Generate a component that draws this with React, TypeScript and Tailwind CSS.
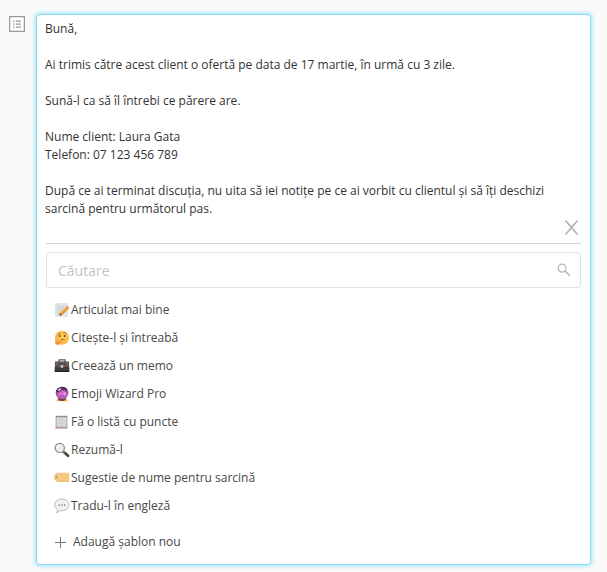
import React, { useState } from 'react';

interface Template {
  id: string;
  label: string;
  icon: React.ReactNode;
}

const message = `Bună,

Ai trimis către acest client o ofertă pe data de 17 martie, în urmă cu 3 zile.

Sună-l ca să îl întrebi ce părere are.

Nume client: Laura Gata
Telefon: 07 123 456 789

După ce ai terminat discuția, nu uita să iei notițe pe ce ai vorbit cu clientul și să îți deschizi sarcină pentru următorul pas.`;

const templates: Template[] = [
  { id: 'articulate', label: 'Articulat mai bine', icon: <MemoIcon /> },
  { id: 'ask', label: 'Citește-l și întreabă', icon: <ThinkingIcon /> },
  { id: 'memo', label: 'Creează un memo', icon: <BriefcaseIcon /> },
  { id: 'emoji', label: 'Emoji Wizard Pro', icon: <CrystalBallIcon /> },
  { id: 'bullets', label: 'Fă o listă cu puncte', icon: <NotepadIcon /> },
  { id: 'summary', label: 'Rezumă-l', icon: <MagnifierIcon /> },
  { id: 'name', label: 'Sugestie de nume pentru sarcină', icon: <LabelIcon /> },
  { id: 'translate', label: 'Tradu-l în engleză', icon: <SpeechIcon /> },
];

export default function App() {
  const [query, setQuery] = useState('');
  const visible = templates.filter(t => t.label.toLowerCase().includes(query.toLowerCase()));

  return (
    <div className="h-[572px] w-[607px] overflow-hidden bg-[#fafafa] pl-[9px] pt-[14px] flex items-start font-['Open_Sans',sans-serif] text-[12px] leading-[18px] text-[#333]">
      <ListIcon />
      <div className="ml-[11px] h-[551px] w-[555px] shrink-0 rounded-[4px] border border-[#8bdcf3] bg-white px-[9px] shadow-[0_0_4px_1px_#96e2f8] flex flex-col">
        <p className="-ml-px mt-[5px] h-[198px] whitespace-pre-wrap">{message}</p>

        <div className="flex h-[26px] justify-end border-b border-[#d2d2d2] pr-[2px] pt-[2px]">
          <button aria-label="Închide" className="h-[15px] w-[15px]">
            <svg viewBox="0 0 15 15" className="h-[15px] w-[15px]" fill="none" stroke="#b0b0b0" strokeWidth="1.6">
              <path d="M1.5 .5 13.5 14.5M13.5 .5 1.5 14.5" />
            </svg>
          </button>
        </div>

        <label className="mt-2 flex h-[36px] shrink-0 items-center rounded-[3px] border border-[#dfdfe5] pl-[11px] pr-[9px]">
          <input
            value={query}
            onChange={e => setQuery(e.target.value)}
            placeholder="Căutare"
            className="min-w-0 flex-1 pt-[2px] text-[14px] outline-none placeholder:text-[#c3c3c3]"
          />
          <svg viewBox="0 0 14 14" className="h-[14px] w-[14px]" fill="none" stroke="#b5b5b5" strokeWidth="1.2">
            <circle cx="5.2" cy="5.2" r="4" />
            <path d="m8.2 8.2 4.8 4.5" strokeWidth="1.5" />
          </svg>
        </label>

        <ul className="mt-2 pl-2 text-[#484848]">
          {visible.map(t => (
            <li key={t.id} className="flex h-7 items-center gap-px">
              <svg viewBox="0 0 16 16" className="h-4 w-4 shrink-0">{t.icon}</svg>
              <span>{t.label}</span>
            </li>
          ))}
        </ul>

        <button className="mt-2 flex h-7 items-center pl-2 text-[#484848]">
          <svg viewBox="0 0 12 12" className="mr-[7px] h-3 w-3" stroke="#777" strokeWidth="1">
            <path d="M6.5 1v11M1 6.5h11" />
          </svg>
          Adaugă șablon nou
        </button>
      </div>
    </div>
  );
}

function ListIcon() {
  return (
    <svg viewBox="0 0 16 16" className="mt-[2px] h-4 w-4 shrink-0" fill="none" stroke="#999">
      <rect x=".6" y=".6" width="14.8" height="14.8" fill="#fff" strokeWidth="1.3" />
      <path d="M4 5.2h1.6M4 8.2h1.6M4 11.2h1.6M7 5.2h5M7 8.2h5M7 11.2h5" strokeWidth="1.2" />
    </svg>
  );
}

function MemoIcon() {
  return (
    <>
      <path d="M1 1h13v14H1z" fill="#e5e6e8" />
      <path d="M3 4h8M3 6h7M3 8h6M3 10h4M3 12h3" stroke="#b9bec4" strokeWidth=".8" strokeDasharray="2 .6" />
      <path d="m5.2 13.8.9-3 6-6.1 2.3 2-6.1 6.2z" fill="#f5a72c" />
      <path d="m12.1 4.7 1-1 2.2 2-.9 1z" fill="#d7777d" />
      <path d="m5.2 13.8.9-3 2.2 2.1z" fill="#76573b" />
      <path d="m8 12.4 6-6" stroke="#b87922" strokeWidth=".7" />
    </>
  );
}

function ThinkingIcon() {
  return (
    <>
      <circle cx="8" cy="7.8" r="7" fill="#fbb94b" />
      <circle cx="8.5" cy="6" r="5" fill="#fdc653" />
      <circle cx="5.5" cy="6" r=".9" fill="#633f29" />
      <circle cx="10.7" cy="6" r=".9" fill="#633f29" />
      <path d="M4 4.2q1.4-1.2 2.8-.5M9.3 3q1.6-1 3 .4M6.7 9.6q2-.9 4 .2" fill="none" stroke="#7d4d29" strokeWidth=".7" />
      <path d="M1.3 10.2c1-.8 1.4.8 2.3 1.2l4-1.1c1 .1.8 1-.1 1.3l-1.8.7c1 1.3-.7 2.8-2.2 2.6C1.8 14.8.5 13.1 1.3 10.2Z" fill="#ef9830" />
    </>
  );
}

function BriefcaseIcon() {
  return (
    <>
      <path d="M5 4V1.8h6V4" fill="none" stroke="#555" strokeWidth="1.2" />
      <path d="M1.2 3.5h13.6L15.5 14H.5z" fill="#3d3b3d" />
      <path d="M1 4h14v3.5L8 9 1 7.5z" fill="#555052" />
      <path d="M1 8q7 1.5 14 0" fill="none" stroke="#9b6564" strokeWidth=".7" />
      <path d="M3 4v3M13 4v3" stroke="#a17b78" strokeWidth=".8" />
      <path d="M6.8 7h2.4v2.8H6.8z" fill="#c7c7c7" />
      <path d="M1 13.5h14" stroke="#252326" />
    </>
  );
}

function CrystalBallIcon() {
  return (
    <>
      <path d="m3 15 1.5-3h7l1.6 3z" fill="#79403e" />
      <path d="M2.8 14.5h3M10.2 14.5h3" stroke="#efa33d" strokeWidth="1.3" />
      <circle cx="8" cy="7" r="6.3" fill="#9a4a9f" />
      <path d="M2 6A6.2 6.2 0 0 1 13.8 4.6L9 3.6 4 6.2z" fill="#4f2c5c" />
      <path d="M3.4 7.6 8.2 4.4l4.2 1.8.6 3.3-4.1 3-4.6-1.4z" fill="#d36bcd" />
      <path d="m4.3 4.6 2.6-2.1" stroke="#f5dcf5" strokeWidth="1.4" />
      <circle cx="10.7" cy="7.4" r="1.2" fill="#e9a2e4" />
      <path d="M5.5 9.4q2 1.8 4.5.8" fill="none" stroke="#8a3a92" strokeWidth=".8" />
    </>
  );
}

function NotepadIcon() {
  return (
    <>
      <path d="M1.5 2h12v12h-12z" fill="#b6b6b6" />
      <path d="M2.8 3.6h9.4v9.2H2.8z" fill="#d9d9da" />
      <path d="M2 2.4h11" stroke="#777" strokeWidth="1.3" strokeDasharray="1 .6" />
      <path d="M4 5.5h7M4 7.5h7M4 9.5h7M4 11.5h7" stroke="#c5c5c8" strokeWidth=".5" />
      <path d="M1.5 14h12" stroke="#a77d80" />
    </>
  );
}

function MagnifierIcon() {
  return (
    <>
      <path d="m9 9.3 5 4.5" stroke="#454545" strokeWidth="2.7" strokeLinecap="round" />
      <path d="m8.8 8.8 2 1.8" stroke="#888" strokeWidth="1.5" />
      <circle cx="5.8" cy="5.9" r="4.6" fill="#e8eef0" stroke="#8c8c8c" strokeWidth="1.2" />
      <path d="M3.1 6a2.8 2.8 0 0 1 2.8-2.8" fill="none" stroke="#fff" />
    </>
  );
}

function LabelIcon() {
  return (
    <>
      <path d="M3 2.7h12.2v9H3L.3 9.5V5z" fill="#f8c77f" />
      <path d="M3 11.2h12" stroke="#edb66a" strokeWidth=".8" />
      <circle cx="2.6" cy="7.2" r=".9" fill="#8e8b83" />
      <path d="M.5 7q.8-3 3-3.3" fill="none" stroke="#bfc1bd" strokeWidth=".7" />
    </>
  );
}

function SpeechIcon() {
  return (
    <>
      <path d="M7.8 1C3.7 1 .7 3.5.7 6.9c0 2 1.1 3.6 2.8 4.7L2.6 15l3.1-2.4c5 .8 9.3-1.8 9.3-5.7C15 3.5 11.9 1 7.8 1Z" fill="#f1f1f1" stroke="#b6b6b6" strokeWidth=".9" />
      <path d="M4.5 7.1h1.3M7.3 7.1h1.3M10.1 7.1h1.3" stroke="#666" strokeWidth="1.3" />
    </>
  );
}
